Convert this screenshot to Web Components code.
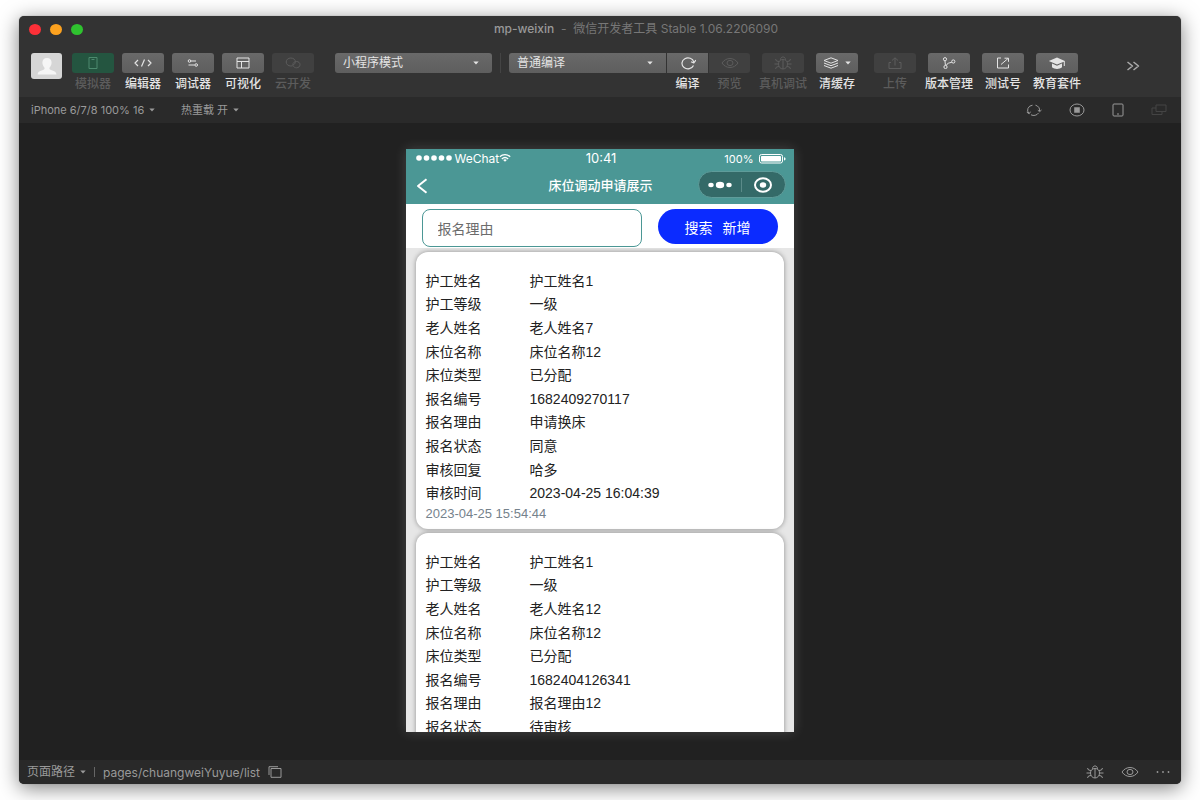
<!DOCTYPE html>
<html lang="zh-CN">
<head>
<meta charset="utf-8">
<title>mp-weixin - 微信开发者工具</title>
<style>
  body { margin: 0; background: #fff; font-family: Inter, "Noto Sans CJK SC", sans-serif; font-size: 12px; }
</style>
</head>
<body>
<dev-window></dev-window>
<script>
const ICONS = {
  user: ['0 0 32 26', '<path fill="currentColor" stroke="none" d="M16 5c-3 0-4.600 2-4.600 4.600 0 2 .8 3.800 2 4.800.6 1.400-.2 2.200-2 2.800-3 1-4.800 1.800-4.800 4.300h18.800c0-2.500-1.800-3.300-4.800-4.300-1.800-.6-2.600-1.400-2-2.800 1.200-1 2-2.800 2-4.800C20.600 7 19 5 16 5z"/>'],
  phone: ['0 0 10 12', '<path d="M1 .5h8v11H1zM3.500 2.500h3"/>'],
  code: ['0 0 18 10', '<path stroke-width="1.200" d="M4 2 1 5l3 3M14 2l3 3-3 3M10.500 1.500l-3 7"/>'],
  sliders: ['0 0 12 10', '<circle cx="2.500" cy="3" r="1.300"/><path d="M3.800 3H9M1.500 7h6.200"/><circle cx="9.200" cy="7" r="1.300"/>'],
  layout: ['0 0 14 12', '<path d="M1 1h12v10H1zM1 4.500h12M5.500 4.500V11"/>'],
  cloud: ['0 0 16 12', '<path d="M8.500 8.300c-.8.500-1.700.7-2.700.7C3.200 9 1.200 7.300 1.200 5S3.200 1 5.800 1c2.800 0 4.600 1.800 4.600 3.700 0 1.800-1.200 3-2.600 3M7.800 7.700c0-2 1.700-3.200 3.700-3.200 2 0 3.500 1.300 3.500 3.100s-1.500 3.200-3.500 3.200c-1.500 0-2.600-.7-3.200-1.700"/>'],
  refresh: ['0 0 16 14', '<path stroke-width="1.200" d="M13.500 9.500A6 5.500 0 1 1 13.800 6M15.800 4.200 13.800 7l-2.800-1.200"/>'],
  eye: ['0 0 18 12', '<path d="M1 6c4-6 12-6 16 0-4 6-12 6-16 0z"/><ellipse cx="9" cy="6" rx="3" ry="2.600"/>'],
  bug: ['0 0 18 14', '<path d="M9 3.500c-2.800 0-4.500 1.800-4.500 4.500S6.300 13 9 13s4.500-2.300 4.500-5S11.800 3.500 9 3.500zM9 3.500V13M6.500 3.800C6.500 0 11.500 0 11.500 3.800M4.500 8H.5M13.500 8h4M5 5.500 2.500 5l-1-2M13 5.500l2.500-.5 1-2M5 10.500l-2.500.5-1 2M13 10.500l2.500.5 1 2"/>'],
  layers: ['0 0 16 12', '<path d="M8 .8 15 3.500 8 6.200 1 3.500zM1 6l7 2.700L15 6M1 8.500l7 2.700 7-2.700"/>'],
  upload: ['0 0 14 12', '<path d="M3 5.500H1v6h12v-6h-2M7 8.500V1M4 3.500 7 .8l3 2.700"/>'],
  branch: ['0 0 14 12', '<circle cx="3" cy="2.200" r="1.600"/><circle cx="3.500" cy="10" r="1.600"/><circle cx="11.300" cy="4.500" r="1.600"/><path d="M3 4l.4 4.300M4.400 8.600C5 6 7 6 9.800 5.300"/>'],
  export: ['0 0 14 12', '<path d="M5 1H1.500v10h11V7.500M5 7.500 12 1.500M8.500 1.200h4v3.600"/>'],
  cap: ['0 0 18 13', '<path fill="currentColor" stroke="none" d="M9 .5.800 4 9 7.500l6.800-2.800V9h1V4zM4 6.500v3.800c2.600 2.200 7.400 2.200 10 0V6.500L9 8.700z"/>'],
  more: ['0 0 14 10', '<path stroke-width="1.500" d="M1.500 1l5 4-5 4M7.500 1l5 4-5 4"/>'],
  rotate: ['0 0 16 12', '<path d="M3 9.500A5.500 5 0 0 1 6.500 1.200M9.500 1.200A5.500 5 0 0 1 13.500 7M12.500 9A5.500 5 0 0 1 5 10.800M.8 8.200l2.400 1.500 1.300-2M11.800 6.200l1.800 1.500L15.500 6"/>'],
  stop: ['0 0 16 14', '<ellipse cx="8" cy="7" rx="7" ry="6"/><path fill="currentColor" stroke="none" d="M5.200 4.200h5.600v5.600H5.200z"/>'],
  tablet: ['0 0 12 14', '<rect x="1" y="1" width="10" height="12" rx="1"/><path d="M5 11h2"/>'],
  windows: ['0 0 16 12', '<path d="M5 1h10v6.500H5zM5 4H1v6.500h10v-3"/>'],
  copy: ['0 0 14 12', '<path d="M3 2.500h10v8.800H3zM1 9V.7h9"/>'],
  dots: ['0 0 14 4', '<g fill="currentColor" stroke="none"><circle cx="1.500" cy="2" r=".9"/><circle cx="7" cy="2" r=".9"/><circle cx="12.500" cy="2" r=".9"/></g>'],
  signal: ['0 0 36 6', '<g fill="currentColor" stroke="none"><circle cx="3" cy="3" r="2.800"/><circle cx="10.500" cy="3" r="2.800"/><circle cx="18" cy="3" r="2.800"/><circle cx="25.500" cy="3" r="2.800"/><circle cx="33" cy="3" r="2.800"/></g>'],
  wifi: ['0 0 12 8', '<path stroke-width="1.300" d="M.8 2.800c3-2.800 7.400-2.800 10.400 0M2.800 4.900c2-1.700 4.400-1.700 6.400 0"/><path fill="currentColor" stroke="none" d="M4.200 6c1.200-.9 2.400-.9 3.600 0L6 7.800z"/>'],
  battery: ['0 0 28 10', '<rect x=".5" y=".5" width="23" height="8.500" rx="2"/><rect x="2" y="2" width="20" height="5.500" rx=".8" fill="currentColor" stroke="none"/><path fill="currentColor" stroke="none" d="M25 3.200c2 .2 2 3 0 3.200z"/>'],
  back: ['0 0 12 16', '<path stroke-width="2" d="M10.500 1.200 2 8l8.500 6.800"/>'],
  menu: ['0 0 24 8', '<g fill="currentColor" stroke="none"><ellipse cx="3" cy="4" rx="2.700" ry="2.200"/><ellipse cx="12" cy="4" rx="4.200" ry="3.300"/><ellipse cx="21" cy="4" rx="2.700" ry="2.200"/></g>'],
  target: ['0 0 20 16', '<ellipse cx="10" cy="8" rx="8" ry="6.800" stroke-width="2"/><ellipse cx="10" cy="8" rx="3.200" ry="2.700" fill="currentColor" stroke="none"/>'],
  caret: ['0 0 6 4', '<path fill="currentColor" stroke="none" d="M.3.500h5.400L3 3.500z"/>']
};

class UiIcon extends HTMLElement {
  connectedCallback() {
    const [box, body] = ICONS[this.getAttribute('name')];
    const [, , w, h] = box.split(' ');
    this.attachShadow({ mode: 'open' }).innerHTML = `
      <style>:host { display: inline-flex; flex: none; } svg { display: block; }</style>
      <svg aria-hidden="true" width="${w}" height="${h}" viewBox="${box}" fill="none" stroke="currentColor" stroke-linejoin="round">${body}</svg>`;
  }
}

class ToolButton extends HTMLElement {
  connectedCallback() {
    const off = this.hasAttribute('disabled');
    const caret = this.hasAttribute('menu') ? '<ui-icon name="caret"></ui-icon>' : '';
    this.attachShadow({ mode: 'open' }).innerHTML = `
      <style>
        :host { display: block; width: 42px; flex: none; }
        button { all: unset; display: flex; flex-direction: column; align-items: center; gap: 2px; width: 100%; color: #e4e4e4; cursor: pointer; }
        .face { box-sizing: border-box; display: flex; align-items: center; justify-content: center; gap: 6px; width: 100%; height: 20px; border-radius: var(--face-radius, 3px); background: linear-gradient(#696969, #5e5e5e); }
        .label { white-space: nowrap; line-height: 18px; font-weight: 500; }
        button:disabled { color: #5c5c5c; cursor: default; }
        button:disabled .face { background: #404040; }
        :host([active]) button:disabled .face { background: #245540; color: #4c8a6e; }
      </style>
      <button type="button" ${off ? 'disabled' : ''}>
        <span class="face"><ui-icon name="${this.getAttribute('icon')}"></ui-icon>${caret}</span>
        <span class="label"><slot></slot></span>
      </button>`;
  }
}

class UiSelect extends HTMLElement {
  connectedCallback() {
    this.attachShadow({ mode: 'open' }).innerHTML = `
      <style>
        :host { display: inline-grid; align-items: center; color: #9a9a9a; }
        select { grid-area: 1 / 1; appearance: none; border: 0; margin: 0; padding: 0 10px 0 0; background: none; color: inherit; font: inherit; line-height: 20px; outline: 0; }
        ui-icon { grid-area: 1 / 1; justify-self: end; pointer-events: none; }
        :host([filled]) { color: #e4e4e4; width: 157px; height: 20px; }
        :host([filled]) select { width: 100%; height: 20px; padding: 0 20px 0 8px; border-radius: var(--face-radius, 3px); background: linear-gradient(#696969, #5e5e5e); }
        :host([filled]) ui-icon { margin-right: 13px; }
      </style>
      <select aria-label="${this.getAttribute('label')}"><option>${this.getAttribute('value')}</option></select>
      <ui-icon name="caret"></ui-icon>`;
  }
}

class TitleBar extends HTMLElement {
  connectedCallback() {
    this.attachShadow({ mode: 'open' }).innerHTML = `
      <style>
        :host { display: flex; align-items: center; height: 27px; }
        .lights { display: flex; gap: 9px; width: 62px; padding-left: 10px; }
        button { width: 12px; height: 11px; padding: 0; border: 0; border-radius: 50%; }
        .close { background: #fc3038; } .min { background: #fda21f; } .max { background: #2fc32f; }
        h1 { flex: 1; margin: 0; padding-bottom: 2px; text-align: center; font-size: 12px; line-height: 18px; font-weight: 400; color: #777; }
        b { font-weight: 500; color: #999; }
      </style>
      <div class="lights">
        <button class="close" aria-label="关闭"></button><button class="min" aria-label="最小化"></button><button class="max" aria-label="全屏"></button>
      </div>
      <h1><b>mp-weixin</b>&nbsp; -&nbsp; <slot></slot></h1>`;
  }
}

class ToolBar extends HTMLElement {
  connectedCallback() {
    this.attachShadow({ mode: 'open' }).innerHTML = `
      <style>
        :host { display: flex; align-items: flex-start; padding: 10px 41px 4px 12px; }
        .group, .modes { display: flex; gap: 8px; }
        .left { display: flex; gap: 10px; margin-right: 21px; }
        .modes { align-items: flex-start; margin-right: 12px; }
        .modes i { width: 1px; height: 20px; background: #444; }
        .joined { display: flex; align-items: flex-start; gap: 1px; }
        .joined > ui-select { --face-radius: 3px 0 0 3px; }
        .joined > tool-button { --face-radius: 0; width: 41px; }
        .joined > tool-button:last-child { --face-radius: 0 3px 3px 0; }
        .right { display: flex; align-items: flex-start; gap: 16px; flex: 1; }
        .actions { display: flex; gap: 12px; }
        .avatar { display: flex; width: 31px; height: 26px; padding: 0; border: 0; border-radius: 3px; background: #d6d6d6; color: #f5f5f5; }
        .more { margin: 6px 0 0 auto; padding: 0; border: 0; background: none; color: #aaa; }
      </style>
      <div class="left">
        <button class="avatar" aria-label="用户"><ui-icon name="user"></ui-icon></button>
        <div class="group">
          <tool-button icon="phone" active disabled>模拟器</tool-button>
          <tool-button icon="code">编辑器</tool-button>
          <tool-button icon="sliders">调试器</tool-button>
          <tool-button icon="layout">可视化</tool-button>
          <tool-button icon="cloud" disabled>云开发</tool-button>
        </div>
      </div>
      <div class="modes">
        <ui-select filled label="模式" value="小程序模式"></ui-select>
        <i></i>
        <div class="joined">
          <ui-select filled label="编译模式" value="普通编译"></ui-select>
          <tool-button icon="refresh">编译</tool-button>
          <tool-button icon="eye" disabled>预览</tool-button>
        </div>
      </div>
      <div class="right">
        <div class="actions">
          <tool-button icon="bug" disabled>真机调试</tool-button>
          <tool-button icon="layers" menu>清缓存</tool-button>
        </div>
        <div class="actions">
          <tool-button icon="upload" disabled>上传</tool-button>
          <tool-button icon="branch">版本管理</tool-button>
          <tool-button icon="export">测试号</tool-button>
          <tool-button icon="cap">教育套件</tool-button>
        </div>
        <button class="more" aria-label="更多"><ui-icon name="more"></ui-icon></button>
      </div>`;
  }
}

class DeviceBar extends HTMLElement {
  connectedCallback() {
    this.attachShadow({ mode: 'open' }).innerHTML = `
      <style>
        :host { display: flex; align-items: center; gap: 26px; height: 26px; padding: 0 14px 0 12px; background: #2a2a2a; font-size: 11px; }
        nav { display: flex; align-items: center; gap: 27px; margin-left: auto; }
        button { display: flex; padding: 0; border: 0; background: none; color: #999; }
        button:disabled { color: #444; }
      </style>
      <ui-select label="设备" value="iPhone 6/7/8 100% 16"></ui-select>
      <ui-select label="热重载" value="热重载 开"></ui-select>
      <nav>
        <button aria-label="刷新"><ui-icon name="rotate"></ui-icon></button>
        <button aria-label="停止"><ui-icon name="stop"></ui-icon></button>
        <button aria-label="设备"><ui-icon name="tablet"></ui-icon></button>
        <button aria-label="多窗口" disabled><ui-icon name="windows"></ui-icon></button>
      </nav>`;
  }
}

class PhoneHeader extends HTMLElement {
  connectedCallback() {
    this.attachShadow({ mode: 'open' }).innerHTML = `
      <style>
        :host { display: block; background: #4b9795; color: #fff; }
        .status, .nav { display: grid; grid-template-columns: 1fr auto 1fr; align-items: center; }
        .status { height: 18px; padding: 0 7px 0 10px; font-size: 12px; }
        .clock { font-size: 13px; }
        .carrier, .power { display: flex; align-items: center; }
        .carrier { gap: 3px; } .carrier ui-icon + span { margin-right: -3px; }
        .power { justify-content: flex-end; gap: 5px; font-size: 11px; line-height: 16px; padding-top: 2px; }
        .nav { align-items: start; height: 37px; padding: 0 8px 0 10px; }
        h2 { margin: 0; padding-top: 8px; font-size: 13px; line-height: 20px; font-weight: 500; }
        button { display: flex; align-items: center; justify-content: center; padding: 0; border: 0; background: none; color: inherit; }
        .back { justify-self: start; padding-top: 11px; }
        .capsule { justify-self: end; box-sizing: border-box; display: flex; align-items: center; width: 88px; height: 27px; margin-top: 4px; border: 1px solid #5f9c9a; border-radius: 14px; background: #346a68; }
        .capsule button { flex: 1; }
        .capsule button + button { border-left: 1px solid #5b8b89; height: 14px; }
      </style>
      <div class="status">
        <span class="carrier"><ui-icon name="signal"></ui-icon><span>WeChat</span><ui-icon name="wifi"></ui-icon></span>
        <span class="clock">10:41</span>
        <span class="power">100%<ui-icon name="battery"></ui-icon></span>
      </div>
      <div class="nav">
        <button class="back" aria-label="返回"><ui-icon name="back"></ui-icon></button>
        <h2><slot></slot></h2>
        <div class="capsule">
          <button aria-label="菜单"><ui-icon name="menu"></ui-icon></button>
          <button aria-label="关闭小程序"><ui-icon name="target"></ui-icon></button>
        </div>
      </div>`;
  }
}

class SearchRow extends HTMLElement {
  connectedCallback() {
    this.attachShadow({ mode: 'open' }).innerHTML = `
      <style>
        :host { display: flex; align-items: flex-start; gap: 16px; padding: 5px 16px 1px; background: #fff; }
        input { box-sizing: border-box; flex: 1; min-width: 0; height: 38px; padding: 0 15px; border: 1px solid #4b9795; border-radius: 8px; background: #fff; font: inherit; font-size: 14px; outline: 0; }
        input::placeholder { color: #6c6c6c; opacity: 1; }
        .pill { display: flex; align-items: center; justify-content: center; gap: 10px; width: 120px; height: 35px; border-radius: 18px; background: #0b2bff; }
        button { padding: 0; border: 0; background: none; color: #fff; font: inherit; font-size: 14px; }
      </style>
      <input type="text" aria-label="报名理由" placeholder="报名理由">
      <div class="pill"><button>搜索</button><button>新增</button></div>`;
  }
}

class RecordCard extends HTMLElement {
  set record({ rows, date }) {
    this.attachShadow({ mode: 'open' }).innerHTML = `
      <style>
        :host { display: block; flex: none; padding: 17px 10px 6px; border-radius: 12px; background: #fff; color: #222; font-family: "Liberation Sans", "Noto Sans CJK SC", sans-serif; box-shadow: 0 0 5px rgba(0, 0, 0, .38); }
        dl { display: grid; grid-auto-rows: 1fr; height: 236px; margin: 0; font-size: 14px; line-height: 20px; }
        .row { display: grid; grid-template-columns: 104px 1fr; align-items: center; }
        dd { margin: 0; }
        time { display: block; color: #75828c; font-size: 13px; line-height: 18px; }
      </style>
      <dl>${rows.map(([k, v]) => `<div class="row"><dt>${k}</dt><dd>${v}</dd></div>`).join('')}</dl>
      <time>${date}</time>`;
  }
}

const RECORDS = [
  { date: '2023-04-25 15:54:44', rows: [['护工姓名', '护工姓名1'], ['护工等级', '一级'], ['老人姓名', '老人姓名7'], ['床位名称', '床位名称12'], ['床位类型', '已分配'], ['报名编号', '1682409270117'], ['报名理由', '申请换床'], ['报名状态', '同意'], ['审核回复', '哈多'], ['审核时间', '2023-04-25 16:04:39']] },
  { date: '', rows: [['护工姓名', '护工姓名1'], ['护工等级', '一级'], ['老人姓名', '老人姓名12'], ['床位名称', '床位名称12'], ['床位类型', '已分配'], ['报名编号', '1682404126341'], ['报名理由', '报名理由12'], ['报名状态', '待审核'], ['', ''], ['', '']] }
];

class PhoneSimulator extends HTMLElement {
  connectedCallback() {
    const root = this.attachShadow({ mode: 'open' });
    root.innerHTML = `
      <style>
        :host { display: flex; flex-direction: column; flex: 0 1 388px; min-width: 0; overflow: hidden; background: #e6e6e6; box-shadow: 0 0 12px rgba(255, 255, 255, .16); }
        phone-header, search-row { flex: none; }
        .list { display: flex; flex-direction: column; gap: 4px; flex: 1; min-height: 0; overflow: hidden; padding: 4px 10px 0; }
      </style>
      <phone-header>床位调动申请展示</phone-header>
      <search-row></search-row>
      <div class="list"></div>`;
    const list = root.querySelector('.list');
    for (const record of RECORDS) {
      const card = document.createElement('record-card');
      card.record = record;
      list.append(card);
    }
  }
}

class PathBar extends HTMLElement {
  connectedCallback() {
    this.attachShadow({ mode: 'open' }).innerHTML = `
      <style>
        :host { display: flex; align-items: center; gap: 8px; height: 24px; padding: 0 11px 0 8px; background: #292929; color: #999; font-size: 12px; }
        i { width: 1px; height: 10px; background: #666; }
        nav { display: flex; align-items: center; gap: 17px; margin-left: auto; }
        button { display: flex; padding: 0; border: 0; background: none; color: inherit; }
      </style>
      <ui-select label="页面路径" value="页面路径"></ui-select>
      <i></i>
      <span>pages/chuangweiYuyue/list</span>
      <button aria-label="复制路径"><ui-icon name="copy"></ui-icon></button>
      <nav>
        <button aria-label="调试"><ui-icon name="bug"></ui-icon></button>
        <button aria-label="预览"><ui-icon name="eye"></ui-icon></button>
        <button aria-label="更多"><ui-icon name="dots"></ui-icon></button>
      </nav>`;
  }
}

class DevWindow extends HTMLElement {
  connectedCallback() {
    this.attachShadow({ mode: 'open' }).innerHTML = `
      <style>
        :host { display: block; box-sizing: border-box; height: 100vh; padding: 16px 19px; }
        .window { display: flex; flex-direction: column; height: 100%; overflow: hidden; border-radius: 5px; background: #333; box-shadow: 0 0 1px #777, 0 4px 20px rgba(0, 0, 0, .5); }
        title-bar, tool-bar, device-bar, path-bar { flex: none; }
        main { display: flex; justify-content: center; flex: 1; min-height: 0; padding: 26px 1px 28px 0; background: #212121; }
      </style>
      <div class="window">
        <title-bar>微信开发者工具 Stable 1.06.2206090</title-bar>
        <tool-bar></tool-bar>
        <device-bar></device-bar>
        <main><phone-simulator></phone-simulator></main>
        <path-bar></path-bar>
      </div>`;
  }
}

customElements.define('ui-icon', UiIcon);
customElements.define('tool-button', ToolButton);
customElements.define('ui-select', UiSelect);
customElements.define('title-bar', TitleBar);
customElements.define('tool-bar', ToolBar);
customElements.define('device-bar', DeviceBar);
customElements.define('phone-header', PhoneHeader);
customElements.define('search-row', SearchRow);
customElements.define('record-card', RecordCard);
customElements.define('phone-simulator', PhoneSimulator);
customElements.define('path-bar', PathBar);
customElements.define('dev-window', DevWindow);
</script>
</body>
</html>
